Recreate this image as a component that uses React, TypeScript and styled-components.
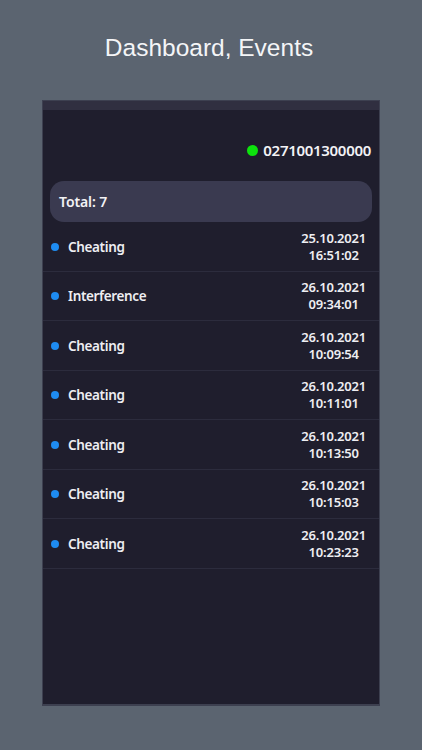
import React from "react";
import styled, { createGlobalStyle } from "styled-components";

const GlobalStyle = createGlobalStyle`
  html, body {
    margin: 0;
    padding: 0;
    background: #5b6470;
  }
  body {
    font-family: "Noto Sans", "DejaVu Sans", sans-serif;
  }
`;

const Page = styled.div`
  width: 422px;
  height: 750px;
  background: #5b6470;
  display: flex;
  flex-direction: column;
  align-items: center;
`;

const Title = styled.h1`
  margin: 0;
  height: 100px;
  display: flex;
  align-items: center;
  justify-content: center;
  padding: 0 4px 4px 0;
  box-sizing: border-box;
  font-family: "Liberation Sans", Arial, sans-serif;
  font-weight: normal;
  font-size: 24.5px;
  color: #f4f5f7;
`;

const Phone = styled.div`
  width: 338px;
  height: 606px;
  box-sizing: border-box;
  background: #1f1e2d;
  border: 1px solid #3d4050;
  border-bottom-width: 2px;
  display: flex;
  flex-direction: column;
`;

const StatusStrip = styled.div`
  height: 9px;
  background: #302f40;
`;

const DeviceRow = styled.div`
  display: flex;
  justify-content: flex-end;
  align-items: center;
  gap: 5px;
  height: 20px;
  margin-top: 30px;
  padding-right: 8px;
`;

const Dot = styled.span<{ color: string; size: number }>`
  width: ${({ size }) => size}px;
  height: ${({ size }) => size}px;
  border-radius: 50%;
  background: ${({ color }) => color};
  flex-shrink: 0;
`;

const DeviceId = styled.span`
  color: #f2f2f5;
  font-size: 15px;
  font-weight: 600;
  letter-spacing: -0.3px;
`;

const TotalBox = styled.div`
  margin: 21px 7px 0 7px;
  height: 41px;
  border-radius: 14px;
  background: #3a3a50;
  display: flex;
  align-items: center;
  padding-left: 9px;
  color: #f2f2f5;
  font-size: 14px;
  font-weight: 600;
  letter-spacing: -0.1px;
`;

const List = styled.div`
  display: flex;
  flex-direction: column;
`;

const Row = styled.div`
  height: 49.5px;
  box-sizing: border-box;
  border-bottom: 1px solid #2c2c3d;
  display: flex;
  align-items: center;
  padding: 1px 13px 0 8px;
`;

const EventName = styled.span`
  flex: 1;
  margin-left: 9px;
  color: #eeeef2;
  font-size: 13.5px;
  font-weight: 600;
  letter-spacing: -0.35px;
`;

const Stamp = styled.div`
  display: flex;
  flex-direction: column;
  align-items: center;
  color: #eeeef2;
  font-size: 13px;
  font-weight: 600;
  letter-spacing: -0.2px;
  line-height: 17px;
`;

const events = [
  { name: "Cheating", date: "25.10.2021", time: "16:51:02" },
  { name: "Interference", date: "26.10.2021", time: "09:34:01" },
  { name: "Cheating", date: "26.10.2021", time: "10:09:54" },
  { name: "Cheating", date: "26.10.2021", time: "10:11:01" },
  { name: "Cheating", date: "26.10.2021", time: "10:13:50" },
  { name: "Cheating", date: "26.10.2021", time: "10:15:03" },
  { name: "Cheating", date: "26.10.2021", time: "10:23:23" },
];

export default function App() {
  return (
    <>
      <GlobalStyle />
      <Page>
        <Title>Dashboard, Events</Title>
        <Phone>
          <StatusStrip />
          <DeviceRow>
            <Dot color="#0de20d" size={11} />
            <DeviceId>0271001300000</DeviceId>
          </DeviceRow>
          <TotalBox>Total: {events.length}</TotalBox>
          <List>
            {events.map((e, i) => (
              <Row key={i}>
                <Dot color="#1e8cf2" size={8} />
                <EventName>{e.name}</EventName>
                <Stamp>
                  <span>{e.date}</span>
                  <span>{e.time}</span>
                </Stamp>
              </Row>
            ))}
          </List>
        </Phone>
      </Page>
    </>
  );
}
